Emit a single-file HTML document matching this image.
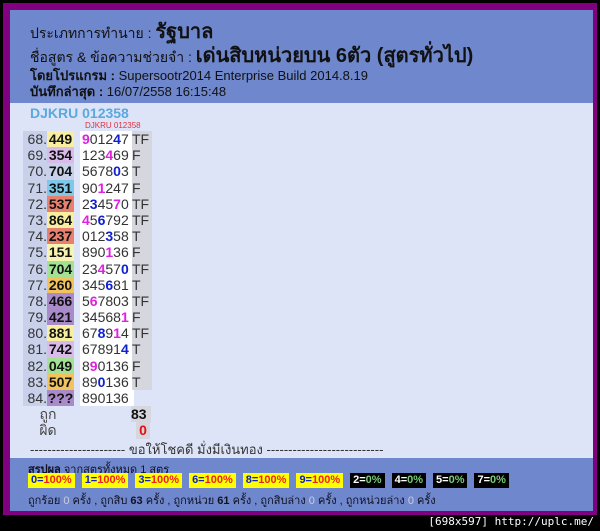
<html><head><style>
body{margin:0;width:600px;height:531px;background:#000;position:relative;overflow:hidden;font-family:"Liberation Sans","Noto Sans CJK SC",sans-serif;}
#frame{position:absolute;left:3px;top:3px;width:594px;height:512px;background:#800080;}
#in{position:absolute;left:7px;top:7px;width:583px;height:501px;background:#dde4f7;}
#hd{position:absolute;left:0;top:0;width:583px;height:93px;background:#6f87cc;color:#111;}
.l{position:absolute;left:18px;white-space:nowrap;}
#rows{position:absolute;left:13px;top:121px;font-size:14px;}
.r{height:16.2px;line-height:16.2px;position:relative;}
.n{position:absolute;left:0;width:24px;background:#c9d1ea;text-align:right;color:#333;padding-right:1px}
.c{position:absolute;left:24px;width:27px;text-align:center;font-weight:bold;color:#111}
.d{position:absolute;left:57px;width:52px;background:#fff;color:#333;padding-left:2px}
.t{position:absolute;left:109px;width:20px;background:#d6d6de;color:#333}
.m{color:#e020e0;font-weight:bold}.b{color:#1020d0;font-weight:bold}
#sm{position:absolute;left:0;top:448px;width:583px;height:53px;background:#6f87cc;font-size:11px;color:#112;}
.p{display:inline-block;padding:0 3px;margin-right:7px;font-weight:bold;font-size:11px;line-height:15px}
.y{background:#ff0;color:#1020c0}.y span{color:#f02020}
.k{background:#000;color:#fff}.k span{color:#7c7}
</style></head><body>
<div id="frame"><div id="in">
<div id="hd">
<div class="l" style="top:5px;font-size:14px;left:20px">ประเภทการทำนาย : <b style="font-size:20px">รัฐบาล</b></div>
<div class="l" style="top:29px;font-size:14px;left:20px">ชื่อสูตร &amp; ข้อความช่วยจำ : <b style="font-size:20px">เด่นสิบหน่วยบน 6ตัว (สูตรทั่วไป)</b></div>
<div class="l" style="top:55px;font-size:13px;left:20px"><b>โดยโปรแกรม :</b> Supersootr2014 Enterprise Build 2014.8.19</div>
<div class="l" style="top:71px;font-size:13px;left:20px"><b>บันทึกล่าสุด :</b> 16/07/2558 16:15:48</div>
</div>
<div class="l" style="top:95px;font-size:14px;font-weight:bold;color:#5aa8dd;left:20px">DJKRU 012358</div>
<div class="l" style="top:111px;left:75px;font-size:8px;color:#e03040">DJKRU 012358</div>
<div id="rows">
<div class="r"><span class="n">68.</span><span class="c" style="background:#f7ef9f">449</span><span class="d"><span class="m">9</span>012<span class="b">4</span>7</span><span class="t">TF</span></div>
<div class="r"><span class="n">69.</span><span class="c" style="background:#d9bbea">354</span><span class="d">123<span class="m">4</span>69</span><span class="t">F</span></div>
<div class="r"><span class="n">70.</span><span class="c" style="background:#c9d1ea">704</span><span class="d">5678<span class="b">0</span>3</span><span class="t">T</span></div>
<div class="r"><span class="n">71.</span><span class="c" style="background:#80c8ea">351</span><span class="d">90<span class="m">1</span>247</span><span class="t">F</span></div>
<div class="r"><span class="n">72.</span><span class="c" style="background:#e8806f">537</span><span class="d">2<span class="b">3</span>45<span class="m">7</span>0</span><span class="t">TF</span></div>
<div class="r"><span class="n">73.</span><span class="c" style="background:#f7ef9f">864</span><span class="d"><span class="m">4</span>5<span class="b">6</span>792</span><span class="t">TF</span></div>
<div class="r"><span class="n">74.</span><span class="c" style="background:#e8806f">237</span><span class="d">012<span class="b">3</span>58</span><span class="t">T</span></div>
<div class="r"><span class="n">75.</span><span class="c" style="background:#f7f3b0">151</span><span class="d">890<span class="m">1</span>36</span><span class="t">F</span></div>
<div class="r"><span class="n">76.</span><span class="c" style="background:#a3e294">704</span><span class="d">23<span class="m">4</span>57<span class="b">0</span></span><span class="t">TF</span></div>
<div class="r"><span class="n">77.</span><span class="c" style="background:#f2c25c">260</span><span class="d">345<span class="b">6</span>81</span><span class="t">T</span></div>
<div class="r"><span class="n">78.</span><span class="c" style="background:#a98bc9">466</span><span class="d">5<span class="m">6</span>7803</span><span class="t">TF</span></div>
<div class="r"><span class="n">79.</span><span class="c" style="background:#a98bc9">421</span><span class="d">34568<span class="m">1</span></span><span class="t">F</span></div>
<div class="r"><span class="n">80.</span><span class="c" style="background:#f7ef9f">881</span><span class="d">67<span class="b">8</span>9<span class="m">1</span>4</span><span class="t">TF</span></div>
<div class="r"><span class="n">81.</span><span class="c" style="background:#d9bbea">742</span><span class="d">67891<span class="b">4</span></span><span class="t">T</span></div>
<div class="r"><span class="n">82.</span><span class="c" style="background:#a3e294">049</span><span class="d">8<span class="m">9</span>0136</span><span class="t">F</span></div>
<div class="r"><span class="n">83.</span><span class="c" style="background:#f2c25c">507</span><span class="d">89<span class="b">0</span>136</span><span class="t">T</span></div>
<div class="r"><span class="n">84.</span><span class="c" style="background:#a98bc9">???</span><span class="d">890136</span><span class="t" style="background:none"></span></div>
<div class="r"><span class="n" style="background:none;width:50px;text-align:center;left:0;color:#444">ถูก</span><span class="t" style="font-weight:bold;color:#111;left:108px">83</span></div>
<div class="r"><span class="n" style="background:none;width:50px;text-align:center;left:0;color:#444">ผิด</span><span class="t" style="font-weight:bold;color:#e01010;text-align:center;width:14px;left:113px">0</span></div>
</div>
<div class="l" style="top:429px;left:20px;font-size:13px;color:#333">---------------------- ขอให้โชคดี มั่งมีเงินทอง ---------------------------</div>
<div id="sm">
<div class="l" style="top:2px;left:18px"><b>สรุปผล</b> จากสูตรทั้งหมด 1 สูตร</div>
<div class="l" style="top:15px;left:18px"><span class="p y">0=<span>100%</span></span><span class="p y">1=<span>100%</span></span><span class="p y">3=<span>100%</span></span><span class="p y">6=<span>100%</span></span><span class="p y">8=<span>100%</span></span><span class="p y">9=<span>100%</span></span><span class="p k">2=<span>0%</span></span><span class="p k">4=<span>0%</span></span><span class="p k">5=<span>0%</span></span><span class="p k">7=<span>0%</span></span></div>
<div class="l" style="top:33px;left:18px">ถูกร้อย <span style="color:#ccd">0</span> ครั้ง , ถูกสิบ <b>63</b> ครั้ง , ถูกหน่วย <b>61</b> ครั้ง , ถูกสิบล่าง <span style="color:#ccd">0</span> ครั้ง , ถูกหน่วยล่าง <span style="color:#ccd">0</span> ครั้ง</div>
</div>
</div></div>
<div style="position:absolute;right:6px;top:515px;color:#fff;font-size:11px;font-family:'DejaVu Sans Mono',monospace">[698x597] http://uplc.me/</div>
</body></html>
